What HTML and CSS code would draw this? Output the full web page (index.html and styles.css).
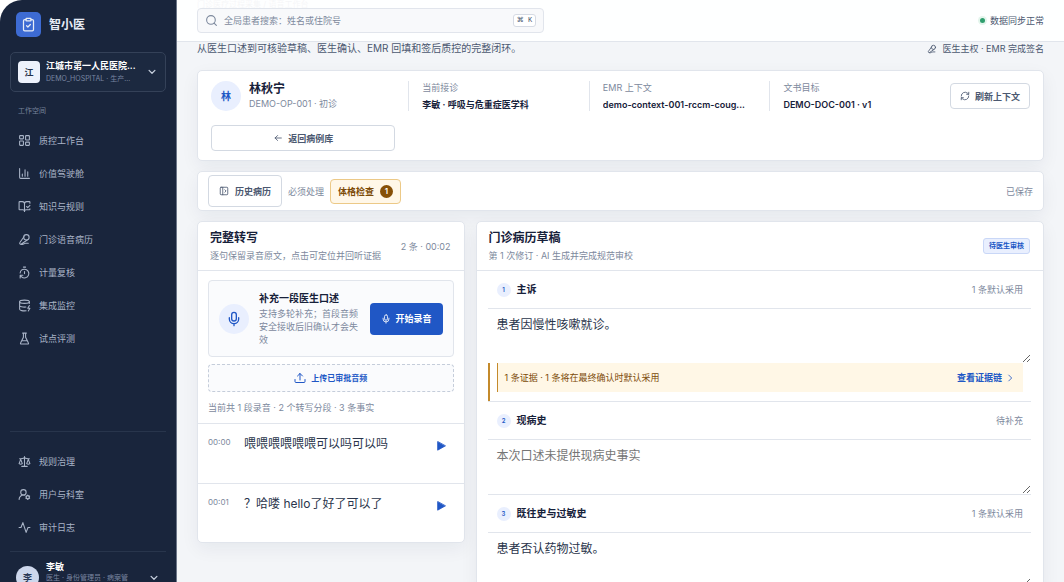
FILE: index.html
```html
<!DOCTYPE html>
<html lang="zh-CN">
<head>
<meta charset="utf-8">
<meta name="viewport" content="width=device-width, initial-scale=1">
<title>智小医</title>
<link rel="stylesheet" href="styles.css">
</head>
<body>
<svg class="sprite" aria-hidden="true">
  <symbol id="i-clip" viewBox="0 0 24 24"><rect x="8" y="2" width="8" height="4" rx="1"/><path d="M16 4h2a2 2 0 0 1 2 2v14a2 2 0 0 1-2 2H6a2 2 0 0 1-2-2V6a2 2 0 0 1 2-2h2M9 14l2 2 4-4"/></symbol>
  <symbol id="i-down" viewBox="0 0 24 24"><path d="m5 8 7 7 7-7"/></symbol>
  <symbol id="i-right" viewBox="0 0 24 24"><path d="m9 19 7-7-7-7"/></symbol>
  <symbol id="i-grid" viewBox="0 0 24 24"><rect x="3" y="3" width="7" height="6" rx="1"/><rect x="14" y="3" width="7" height="8" rx="1"/><rect x="3" y="13" width="7" height="8" rx="1"/><rect x="14" y="15" width="7" height="6" rx="1"/></symbol>
  <symbol id="i-chart" viewBox="0 0 24 24"><path d="M3 3v16a2 2 0 0 0 2 2h16M8 17v-4M13 17V5M18 17V9"/></symbol>
  <symbol id="i-book" viewBox="0 0 24 24"><path d="M12 21V7M16 12l2 2 4-4M22 6V4a1 1 0 0 0-1-1h-5a4 4 0 0 0-4 4 4 4 0 0 0-4-4H3a1 1 0 0 0-1 1v13a1 1 0 0 0 1 1h6a3 3 0 0 1 3 3 3 3 0 0 1 3-3h6a1 1 0 0 0 1-1v-1"/></symbol>
  <symbol id="i-voice" viewBox="0 0 24 24"><circle cx="15.500" cy="8" r="5"/><path d="m11 7-7.500 10.500a2 2 0 0 0 2.800 2.800L17 13M6 21h2c3 0 3-2 6-2h5"/></symbol>
  <symbol id="i-timer" viewBox="0 0 24 24"><path d="M10 2h4M12 14v-4M4 13a8 8 0 0 1 8-7 8 8 0 1 1-5.300 14L4 17.600M9 17H4v5"/></symbol>
  <symbol id="i-data" viewBox="0 0 24 24"><ellipse cx="12" cy="5" rx="9" ry="3"/><path d="M3 5v14a9 3 0 0 0 12 2.800M21 5v3M21 12l-3 5h4l-3 5M3 12a9 3 0 0 0 11.600 2.900"/></symbol>
  <symbol id="i-flask" viewBox="0 0 24 24"><path d="M10 2v7.500L4.700 20.500a1 1 0 0 0 .9 1.500h12.800a1 1 0 0 0 .9-1.500L14 9.500V2M8.500 2h7M7 16h10"/></symbol>
  <symbol id="i-scale" viewBox="0 0 24 24"><path d="m16 16 3-8 3 8c-2 1.300-4 1.300-6 0ZM2 16l3-8 3 8c-2 1.300-4 1.300-6 0ZM7 21h10M12 3v18M3 7h2c2 0 5-1 7-2 2 1 5 2 7 2h2"/></symbol>
  <symbol id="i-usercog" viewBox="0 0 24 24"><circle cx="10" cy="8" r="5"/><path d="M2 21a8 8 0 0 1 10-7.700"/><circle cx="18" cy="17" r="3"/><path d="M18 13v1M18 20v1M14.500 15l1 .6M20.500 18.400l1 .6M14.500 19l1-.6M20.500 15.600l1-.6"/></symbol>
  <symbol id="i-pulse" viewBox="0 0 24 24"><path d="M2 12h3.500L9 3l6 18 3.500-9H22"/></symbol>
  <symbol id="i-search" viewBox="0 0 24 24"><circle cx="11" cy="11" r="8"/><path d="m21 21-4.300-4.300"/></symbol>
  <symbol id="i-refresh" viewBox="0 0 24 24"><path d="M3 12a9 9 0 0 1 15-6.700L21 8M21 3v5h-5M21 12a9 9 0 0 1-15 6.700L3 16M8 16H3v5"/></symbol>
  <symbol id="i-back" viewBox="0 0 24 24"><path d="m11 18-6-6 6-6M5 12h15"/></symbol>
  <symbol id="i-panel" viewBox="0 0 24 24"><rect x="3" y="3" width="18" height="18" rx="2"/><path d="M9 3v18M14 9l3 3-3 3"/></symbol>
  <symbol id="i-mic" viewBox="0 0 24 24"><rect x="8.500" y="2" width="7" height="13" rx="3.500"/><path d="M19 10v2a7 7 0 0 1-14 0v-2M12 19v3"/></symbol>
  <symbol id="i-up" viewBox="0 0 24 24"><path d="M12 16V3M7 8l5-5 5 5M2 15v4a2 2 0 0 0 2 2h16a2 2 0 0 0 2-2v-4"/></symbol>
  <symbol id="i-play" viewBox="0 0 24 24"><path d="M4 2v20l18-10z" fill="currentColor"/></symbol>
</svg>
<div class="app">
  <aside class="sidebar">
    <div class="brand"><span class="brand-mark"><svg class="icon icon-md"><use href="#i-clip"/></svg></span>智小医</div>
    <button class="tenant" type="button">
      <span class="tenant-mark">江</span>
      <span class="tenant-text"><strong>江城市第一人民医院...</strong><small>DEMO_HOSPITAL · 生产...</small></span>
      <svg class="icon icon-sm"><use href="#i-down"/></svg>
    </button>
    <nav class="nav nav-main">
      <p class="nav-label">工作空间</p>
      <a href="#"><svg class="icon"><use href="#i-grid"/></svg>质控工作台</a>
      <a href="#"><svg class="icon"><use href="#i-chart"/></svg>价值驾驶舱</a>
      <a href="#"><svg class="icon"><use href="#i-book"/></svg>知识与规则</a>
      <a href="#"><svg class="icon"><use href="#i-voice"/></svg>门诊语音病历</a>
      <a href="#"><svg class="icon"><use href="#i-timer"/></svg>计量复核</a>
      <a href="#"><svg class="icon"><use href="#i-data"/></svg>集成监控</a>
      <a href="#"><svg class="icon"><use href="#i-flask"/></svg>试点评测</a>
    </nav>
    <nav class="nav nav-admin">
      <a href="#"><svg class="icon"><use href="#i-scale"/></svg>规则治理</a>
      <a href="#"><svg class="icon"><use href="#i-usercog"/></svg>用户与科室</a>
      <a href="#"><svg class="icon"><use href="#i-pulse"/></svg>审计日志</a>
    </nav>
    <button class="user" type="button">
      <span class="user-mark">李</span>
      <span class="user-text"><strong>李敏</strong><small>医生 · 身份管理员 · 病案管</small></span>
      <svg class="icon icon-sm"><use href="#i-down"/></svg>
    </button>
  </aside>

  <div class="main">
    <header class="topbar">
      <label class="search">
        <svg class="icon"><use href="#i-search"/></svg>
        <input type="search" aria-label="全局患者搜索" placeholder="全局患者搜索：姓名或住院号">
        <kbd>⌘ K</kbd>
      </label>
      <span class="sync"><i class="dot"></i>数据同步正常</span>
    </header>

    <main class="content">
      <p class="crumbs">门诊医疗过程采集 / 语音工作台</p>
      <div class="intro">
        <p class="lead">从医生口述到可核验草稿、医生确认、EMR 回填和签后质控的完整闭环。</p>
        <span class="owner"><svg class="icon icon-sm"><use href="#i-voice"/></svg>医生主权 · EMR 完成签名</span>
      </div>

      <section class="card patient">
        <div class="person"><span class="avatar">林</span><div><h2>林秋宁</h2><p>DEMO-OP-001 · 初诊</p></div></div>
        <div class="fact"><span>当前接诊</span><strong>李敏 · 呼吸与危重症医学科</strong></div>
        <div class="fact"><span>EMR 上下文</span><strong>demo-context-001-rccm-coug...</strong></div>
        <div class="fact"><span>文书目标</span><strong>DEMO-DOC-001 · v1</strong></div>
        <button class="btn" type="button"><svg class="icon icon-sm"><use href="#i-refresh"/></svg>刷新上下文</button>
        <button class="btn back" type="button"><svg class="icon icon-sm"><use href="#i-back"/></svg>返回病例库</button>
      </section>

      <section class="card toolbar">
        <button class="btn history" type="button"><svg class="icon icon-sm"><use href="#i-panel"/></svg>历史病历</button>
        <span>必须处理</span>
        <button class="chip" type="button">体格检查<b>1</b></button>
        <span class="saved">已保存</span>
      </section>

      <div class="columns">
        <section class="card transcript">
          <header class="panel-head"><div><h2>完整转写</h2><p>逐句保留录音原文，点击可定位并回听证据</p></div><span class="count">2 条 · 00:02</span></header>
          <div class="capture">
            <div class="record">
              <span class="avatar"><svg class="icon icon-lg"><use href="#i-mic"/></svg></span>
              <div class="record-text"><h3>补充一段医生口述</h3><p>支持多轮补充；首段音频安全接收后旧确认才会失效</p></div>
              <button class="start" type="button"><svg class="icon icon-sm"><use href="#i-mic"/></svg>开始录音</button>
            </div>
            <button class="upload" type="button"><svg class="icon"><use href="#i-up"/></svg>上传已审批音频</button>
            <p class="summary">当前共 1 段录音 · 2 个转写分段 · 3 条事实</p>
          </div>
          <ol class="lines">
            <li><time>00:00</time><p>喂喂喂喂喂喂可以吗可以吗</p><button type="button" aria-label="播放"><svg class="icon icon-sm"><use href="#i-play"/></svg></button></li>
            <li><time>00:01</time><p>？哈喽 hello了好了可以了</p><button type="button" aria-label="播放"><svg class="icon icon-sm"><use href="#i-play"/></svg></button></li>
          </ol>
        </section>

        <section class="card draft">
          <header class="panel-head"><div><h2>门诊病历草稿</h2><p>第 1 次修订 · AI 生成并完成规范审校</p></div><span class="status">待医生审核</span></header>
          <div class="fields">
            <section class="field">
              <div class="field-head"><i>1</i><label for="f1">主诉</label><span>1 条默认采用</span></div>
              <textarea id="f1">患者因慢性咳嗽就诊。</textarea>
              <div class="evidence"><div class="evidence-row"><span>1 条证据 · 1 条将在最终确认时默认采用</span><a href="#">查看证据链<svg class="icon icon-sm"><use href="#i-right"/></svg></a></div></div>
            </section>
            <section class="field">
              <div class="field-head"><i>2</i><label for="f2">现病史</label><span>待补充</span></div>
              <textarea id="f2" placeholder="本次口述未提供现病史事实"></textarea>
            </section>
            <section class="field">
              <div class="field-head"><i>3</i><label for="f3">既往史与过敏史</label><span>1 条默认采用</span></div>
              <textarea id="f3">患者否认药物过敏。</textarea>
            </section>
          </div>
        </section>
      </div>
    </main>
  </div>
</div>
</body>
</html>
```

FILE: styles.css
```css
:root {
  --navy: #19253c;
  --ink: #17213a;
  --text: #4b5870;
  --muted: #7d899d;
  --line: #e1e5ec;
  --blue: #2057c5;
  --pale: #e9effe;
}

* { box-sizing: border-box; }

body, h2, h3, p, ol { margin: 0; padding: 0; }

body {
  background: #fff;
  color: var(--text);
  font: 9px/13px Inter, "Noto Sans CJK SC", sans-serif;
}

button, input, textarea { font: inherit; color: inherit; }
button { cursor: pointer; }
a { color: inherit; text-decoration: none; }
i { font-style: normal; }
.sprite { display: none; }

.icon {
  width: 13px;
  height: 13px;
  flex: none;
  fill: none;
  stroke: currentColor;
  stroke-width: 2;
  stroke-linecap: round;
  stroke-linejoin: round;
}
.icon-sm { width: 10px; height: 10px; }
.icon-md { width: 15px; height: 15px; }
.icon-lg { width: 16px; height: 16px; }

.app {
  display: grid;
  grid-template-columns: 177px minmax(0, 1fr);
  height: 100vh;
  overflow: hidden;
}

/* Sidebar */
.sidebar {
  display: flex;
  flex-direction: column;
  min-height: 0;
  padding: 12px 10px 0;
  background: var(--navy);
  border-right: 1px solid #6c7688;
  border-top-left-radius: 22px;
  color: #a9b4c7;
}
.brand {
  display: flex;
  align-items: center;
  gap: 8px;
  padding-left: 6px;
  color: #e8edf6;
  font-size: 12px;
  font-weight: 600;
}
.brand-mark {
  display: grid;
  place-items: center;
  width: 25px;
  height: 25px;
  border-radius: 5px;
  background: #3d6bd3;
}
.tenant {
  display: flex;
  align-items: center;
  gap: 6px;
  height: 40px;
  flex: none;
  margin-top: 15px;
  padding: 0 8px 0 7px;
  border: 1px solid #344158;
  border-radius: 5px;
  background: #1c2940;
  text-align: left;
}
.tenant-mark {
  display: grid;
  place-items: center;
  flex: none;
  width: 22px;
  height: 22px;
  border-radius: 4px;
  background: #edf2fc;
  color: #24304a;
  font-weight: 600;
}
.tenant-text, .user-text { display: grid; flex: 1; min-width: 0; white-space: nowrap; }
.tenant-text strong, .user-text strong { color: #fff; font-weight: 600; }
.tenant-text small, .user-text small { color: #7986a0; font-size: 7px; }
.user-text small { line-height: 10px; }
.tenant .icon, .user .icon { color: #c6cfdd; stroke-width: 3; }

.nav a {
  display: flex;
  align-items: center;
  gap: 8px;
  height: 33px;
  padding-left: 8px;
}
.nav-main { flex: 1; padding-top: 12px; }
.nav-label {
  padding: 0 8px 6px;
  margin-bottom: 1px;
  color: #76839b;
  font-size: 7px;
}
.nav-admin {
  padding: 13px 0 7px;
  border-top: 1px solid #28354c;
}
.user {
  display: flex;
  align-items: flex-start;
  gap: 7px;
  flex: 0 0 31px;
  padding: 8px 7px 0 6px;
  overflow: hidden;
  border: 0;
  border-top: 1px solid #28354c;
  background: none;
  text-align: left;
}
.user-mark {
  display: grid;
  place-items: center;
  flex: none;
  width: 23px;
  height: 23px;
  margin-top: 6px;
  border-radius: 50%;
  background: #cdd7ec;
  color: #2a3854;
  font-weight: 600;
}
.user .icon { margin-top: 13px; }

/* Main area: the top bar overlays the scrolled content */
.main {
  display: grid;
  grid-template-columns: minmax(0, 1fr);
  min-height: 0;
  background: #f3f5f8;
}
.topbar, .content { grid-area: 1 / 1; }
.topbar {
  z-index: 1;
  align-self: start;
  display: flex;
  align-items: center;
  justify-content: space-between;
  height: 42px;
  padding: 0 20px;
  border-bottom: 1px solid var(--line);
  background: rgb(255 255 255 / 92%);
}
.search {
  display: flex;
  align-items: center;
  gap: 6px;
  width: 41%;
  min-width: 240px;
  height: 25px;
  padding: 0 7px;
  border: 1px solid var(--line);
  border-radius: 4px;
  background: #f8f9fb;
  color: var(--muted);
}
.search input {
  flex: 1;
  min-width: 0;
  padding: 0;
  border: 0;
  outline: 0;
  background: none;
}
.search input::placeholder { color: #7d899d; }
.search kbd {
  padding: 0 3px;
  border: 1px solid #d6dbe4;
  border-radius: 3px;
  background: #fff;
  color: var(--text);
  font: 7px/11px "Liberation Mono", "DejaVu Sans", monospace;
}
.sync, .owner { display: flex; align-items: center; gap: 5px; white-space: nowrap; }
.dot {
  width: 5px;
  height: 5px;
  border-radius: 50%;
  background: #2f9e6e;
  box-shadow: 0 0 0 2px #e3f5ec;
}

.content { padding: 0 20px; }
.crumbs {
  height: 41px;
  color: var(--muted);
  font-size: 8px;
  line-height: 9px;
}
.intro {
  display: flex;
  justify-content: space-between;
  align-items: center;
  height: 29px;
  padding-bottom: 14px;
}
.lead { font-size: 10px; }

.card {
  border: 1px solid var(--line);
  border-radius: 5px;
  background: #fff;
  box-shadow: 0 6px 18px rgb(25 40 75 / 6%);
}
.avatar {
  display: grid;
  place-items: center;
  flex: none;
  width: 30px;
  height: 30px;
  border-radius: 50%;
  background: var(--pale);
  color: var(--blue);
  font-size: 10px;
  font-weight: 600;
}
.btn {
  display: flex;
  align-items: center;
  justify-content: center;
  gap: 5px;
  height: 26px;
  padding: 0 9px;
  border: 1px solid #d3d9e2;
  border-radius: 4px;
  background: #fff;
  font-weight: 600;
  white-space: nowrap;
}

.patient {
  display: grid;
  grid-template-columns: 11fr 10fr 10fr 10fr auto;
  gap: 14px 13px;
  align-items: center;
  padding: 10px 13px 9px;
}
.patient > * { min-width: 0; }
.person { display: flex; align-items: center; gap: 8px; }
.person h2 { color: var(--ink); font-size: 12px; line-height: 16px; font-weight: 600; }
.person p { color: var(--muted); line-height: 14px; }
.fact {
  display: grid;
  gap: 4px;
  padding-left: 13px;
  border-left: 1px solid var(--line);
}
.fact span { color: var(--muted); }
.fact strong {
  overflow: hidden;
  color: var(--ink);
  font-weight: 600;
  text-overflow: ellipsis;
  white-space: nowrap;
}
.back { grid-column: 1; }

.toolbar {
  display: flex;
  align-items: center;
  gap: 6px;
  height: 40px;
  margin: 10px 0;
  padding: 0 10px;
  color: var(--muted);
}
.history { height: 32px; gap: 6px; padding: 0 10px; color: var(--text); }
.chip {
  display: flex;
  align-items: center;
  gap: 6px;
  height: 25px;
  padding: 0 7px;
  border: 1px solid #ecc987;
  border-radius: 4px;
  background: #fff7e8;
  color: #7c4a06;
  font-weight: 600;
}
.chip b {
  width: 13px;
  height: 13px;
  border-radius: 50%;
  background: #865008;
  color: #fff;
  font-size: 8px;
  font-weight: 600;
}
.saved { margin-left: auto; }

.columns {
  display: grid;
  grid-template-columns: minmax(0, 8fr) minmax(0, 17fr);
  gap: 11px;
  align-items: start;
}
.panel-head {
  display: flex;
  align-items: center;
  justify-content: space-between;
  height: 49px;
  padding: 0 13px 0 12px;
  border-bottom: 1px solid var(--line);
  color: var(--muted);
}
.panel-head h2 {
  margin-bottom: 3px;
  color: var(--ink);
  font-size: 12px;
  line-height: 16px;
  font-weight: 600;
}
.count { white-space: nowrap; }

/* Transcript */
.capture { padding: 9px 10px; border-bottom: 1px solid var(--line); }
.record {
  display: flex;
  align-items: center;
  gap: 10px;
  padding: 10px;
  border: 1px solid var(--line);
  border-radius: 4px;
  background: #fafbfd;
}
.record-text { flex: 1; color: var(--muted); }
.record-text h3 {
  margin-bottom: 2px;
  color: var(--ink);
  font-size: 10px;
  line-height: 14px;
  font-weight: 600;
  white-space: nowrap;
}
.start {
  display: flex;
  align-items: center;
  justify-content: center;
  gap: 5px;
  height: 32px;
  padding: 0 11px;
  border: 0;
  border-radius: 4px;
  background: var(--blue);
  color: #fff;
  font-weight: 600;
  white-space: nowrap;
}
.upload {
  display: flex;
  align-items: center;
  justify-content: center;
  gap: 5px;
  width: 100%;
  height: 28px;
  margin: 7px 0 9px;
  border: 1px dashed #c5cdda;
  border-radius: 4px;
  background: #fafbfd;
  color: var(--blue);
  font-size: 8px;
  font-weight: 600;
}
.upload .icon { width: 12px; height: 12px; }
.summary { color: var(--muted); }
.lines { list-style: none; }
.lines li {
  display: flex;
  align-items: flex-start;
  gap: 12px;
  height: 59px;
  padding: 12px 18px 0 10px;
}
.lines li + li { border-top: 1px solid var(--line); }
.lines time { width: 24px; color: var(--muted); font-size: 8px; }
.lines p { flex: 1; color: #2a354b; font-size: 12px; line-height: 16px; }
.lines button {
  display: grid;
  padding: 5px 0 0;
  border: 0;
  background: none;
  color: var(--blue);
}

/* Draft */
.status {
  padding: 0 5px;
  border: 1px solid #c9d7f7;
  border-radius: 3px;
  background: var(--pale);
  color: var(--blue);
  font-size: 7px;
  line-height: 14px;
  font-weight: 600;
}
.fields { padding: 0 12px 0 11px; }
.field { border-bottom: 1px solid var(--line); }
.field-head {
  display: flex;
  align-items: center;
  gap: 6px;
  height: 38px;
  padding: 0 8px 0 9px;
  border-bottom: 1px solid var(--line);
}
.field-head i {
  width: 14px;
  height: 14px;
  border-radius: 50%;
  background: var(--pale);
  color: var(--blue);
  font-size: 6px;
  font-weight: 600;
  line-height: 14px;
  text-align: center;
}
.field-head label { color: var(--ink); font-size: 10px; font-weight: 600; }
.field-head span { margin-left: auto; color: var(--muted); }
.field textarea {
  display: block;
  width: 100%;
  height: 54px;
  padding: 7px 9px;
  border: 0;
  outline: 0;
  background: none;
  color: #2a354b;
  font-size: 12px;
  line-height: 18px;
  resize: vertical;
}
.field textarea::placeholder { color: #757575; }
.evidence {
  padding: 0 8px 9px 7px;
  border-left: 2px solid #c48a2b;
}
.evidence-row {
  display: flex;
  align-items: center;
  justify-content: space-between;
  height: 29px;
  padding: 0 8px 0 7px;
  border-left: 1px solid #c48a2b;
  background: #fff7e6;
  color: #7c4a06;
}
.evidence-row a {
  display: flex;
  align-items: center;
  gap: 3px;
  color: var(--blue);
  font-weight: 600;
}
```
